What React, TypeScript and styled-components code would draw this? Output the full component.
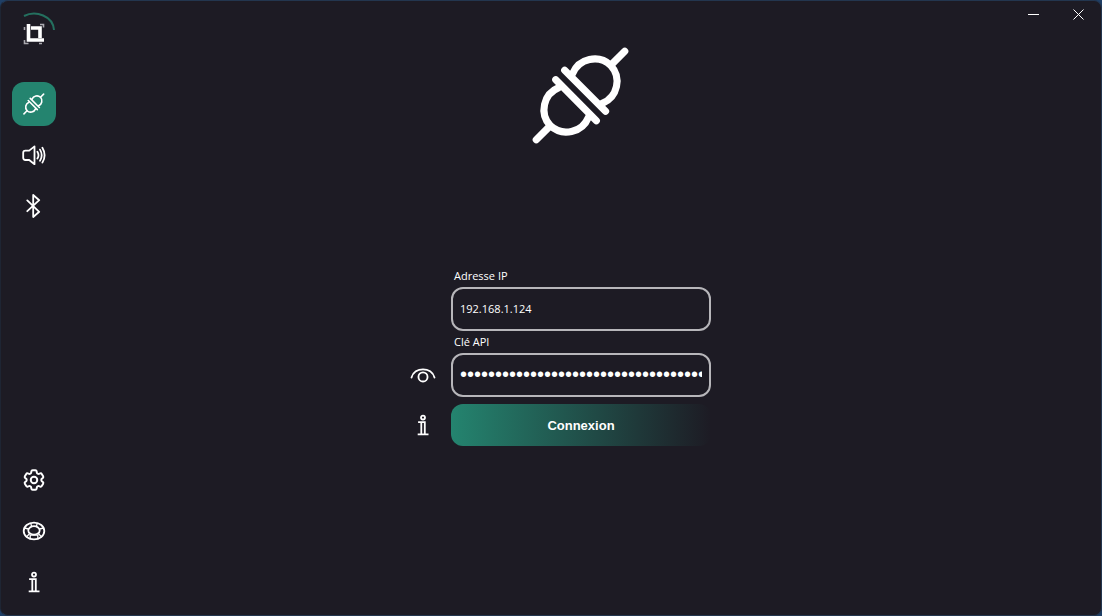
import React, { useState } from 'react';
import styled, { createGlobalStyle } from 'styled-components';
import { HiOutlineCog6Tooth } from 'react-icons/hi2';

const GlobalStyle = createGlobalStyle`
  *, *::before, *::after { box-sizing: border-box; }
  body {
    margin: 0;
    background: #1f3f66;
    color: #ffffff;
    font-family: "Open Sans", "Noto Sans", sans-serif;
    font-size: 11px;
  }
`;

const Window = styled.div`
  display: flex;
  min-height: 100vh;
  position: relative;
  background: #1d1b24;
  border: 1px solid #23364f;
  border-left-color: #1e2533;
  border-radius: 8px;
`;

const Sidebar = styled.aside`
  display: flex;
  flex-direction: column;
  flex: none;
  width: 60px;
  padding: 9px 4px 11px 11px;
`;

const LogoSlot = styled.div`
  height: 40px;
  margin-bottom: 32px;
`;

const NavGroup = styled.nav<{ $end?: boolean }>`
  display: flex;
  flex-direction: column;
  gap: 7px;
  margin-top: ${(p) => (p.$end ? 'auto' : '0')};
`;

const IconButton = styled.button<{ $active?: boolean }>`
  display: flex;
  align-items: center;
  justify-content: center;
  width: 44px;
  height: 44px;
  padding: 0;
  border: 0;
  border-radius: 12px;
  color: #ffffff;
  background: ${(p) => (p.$active ? '#24846f' : 'transparent')};
  cursor: pointer;
`;

const GearIcon = styled(HiOutlineCog6Tooth)`
  path { stroke-width: 1.8; }
`;

const Main = styled.main`
  display: flex;
  flex-direction: column;
  align-items: center;
  flex: 1;
  padding-top: 45px;
`;

const Form = styled.form`
  display: grid;
  grid-template-columns: 44px 260px 44px;
  column-gap: 6px;
  margin-top: 120px;
`;

const Label = styled.label`
  grid-column: 2;
  height: 22px;
  padding: 2px 3px;
  line-height: 18px;
`;

const TextInput = styled.input<{ $masked?: boolean }>`
  grid-column: 2;
  width: 100%;
  height: 44px;
  padding: 0 7px 2px;
  border: 2px solid #b7b6ba;
  border-radius: 12px;
  outline: none;
  background: transparent;
  color: #ffffff;
  font-family: ${(p) => (p.$masked ? '"Liberation Sans", sans-serif' : 'inherit')};
  font-size: ${(p) => (p.$masked ? '20px' : '11px')};
`;

const SideCell = styled.div<{ $row: number }>`
  grid-column: 1;
  grid-row: ${(p) => p.$row};
`;

const Submit = styled.button`
  grid-column: 2;
  height: 42px;
  margin-top: 7px;
  border: 0;
  border-radius: 12px;
  background: linear-gradient(90deg, #24846f, #1d1b24);
  color: #ffffff;
  font-family: "Liberation Sans", sans-serif;
  font-size: 13px;
  font-weight: 700;
  cursor: pointer;
`;

const InfoCell = styled(SideCell)`
  margin-top: 6px;
`;

const Caption = styled.div`
  position: absolute;
  top: 0;
  right: 0;
  display: flex;
`;

const CaptionButton = styled.button`
  display: flex;
  align-items: center;
  justify-content: center;
  width: 45px;
  height: 26px;
  padding: 0;
  border: 0;
  background: transparent;
  color: #ffffff;
`;

const Glyph = ({ size = 24, width = 2, children }: { size?: number; width?: number; children: React.ReactNode }) => (
  <svg width={size} height={size} viewBox="0 0 24 24" fill="none" stroke="currentColor" strokeWidth={width} strokeLinecap="round" strokeLinejoin="round" aria-hidden="true">
    {children}
  </svg>
);

const Plug = ({ size }: { size: number }) => (
  <svg width={size} height={size} viewBox="1 0 100 100" fill="none" stroke="currentColor" strokeWidth="7.2" strokeLinecap="round" aria-hidden="true">
    <path d="M5.3 94.7L19.3 80.7M94.7 5.3L80.7 19.3M25 34L66 75.5M34 24.5L75.3 66" />
    <path d="M42 28A24 24 0 0 1 80.5 19.5A24 24 0 0 1 72 58M28 42A24 24 0 0 0 19.5 80.5A24 24 0 0 0 58 72" />
  </svg>
);

const Logo = () => (
  <svg width="44" height="40" viewBox="0 0 44 40" fill="none" role="img" aria-label="Logo">
    <path d="M12 6C24 0 41 6 42 20" stroke="#24705f" strokeWidth="2" />
    <path d="M12.5 20v-3M28 14.5h3.5v3M12.5 30v3.5h4M27 33.5h3" stroke="#aaa9af" strokeWidth="1.6" />
    <path d="M16.5 14v16h15.5M19 18h9v10" stroke="#ffffff" strokeWidth="3.6" />
  </svg>
);

const Speaker = () => (
  <Glyph width={1.8}>
    <path d="M12.5 3.4v17.8L7.2 17H3.4Q1.2 17 1.2 14.8V9.8Q1.2 7.6 3.4 7.6H7.2Z" />
    <path d="M15.4 8.8q2.2 3.4 0 6.8M18 6.6q3.4 5.6 0 11.2M20.4 4.8q4.4 7.4 0 14.8" />
  </Glyph>
);

const Bluetooth = () => (
  <Glyph width={1.8}>
    <path d="M5.3 6.4L17.2 17.8L11.2 23V1L17.2 6.2L5.3 17.2" />
  </Glyph>
);

const LifeBuoy = () => (
  <Glyph width={1.8}>
    <ellipse cx="12" cy="12" rx="10.3" ry="8.4" />
    <ellipse cx="12" cy="11.4" rx="5.7" ry="4.2" />
    <path d="M8.8 4.4l.8 3.2M15.2 4.4l-.8 3.2M2.5 9l4 1M21.5 9l-4 1M4.8 17.6l3-3.3M19.2 17.6l-3-3.3M8.2 15.8v3.6M15.8 15.8v3.6M8.2 16.2h7.6" strokeWidth="1.3" />
  </Glyph>
);

const Info = () => (
  <Glyph width={1.8}>
    <circle cx="12" cy="4.6" r="2" />
    <path d="M8 9.2h5.8v12M10.3 9.2v12M7.6 21.3h9" strokeLinecap="square" strokeLinejoin="miter" />
  </Glyph>
);

const Eye = () => (
  <Glyph size={26} width={1.7}>
    <path d="M1.4 14.4C4 4.2 20 4.2 22.6 14.4" />
    <circle cx="12" cy="13.8" r="4.2" />
  </Glyph>
);

export default function App() {
  const [ip, setIp] = useState('192.168.1.124');
  const [apiKey, setApiKey] = useState('0123456789abcdef0123456789abcdef01234567');
  const [visible, setVisible] = useState(false);

  return (
    <>
      <GlobalStyle />
      <Window>
        <Sidebar>
          <LogoSlot><Logo /></LogoSlot>
          <NavGroup>
            <IconButton $active aria-label="Connexion"><Plug size={22} /></IconButton>
            <IconButton aria-label="Audio"><Speaker /></IconButton>
            <IconButton aria-label="Bluetooth"><Bluetooth /></IconButton>
          </NavGroup>
          <NavGroup $end>
            <IconButton aria-label="Paramètres"><GearIcon size={26} /></IconButton>
            <IconButton aria-label="Aide"><LifeBuoy /></IconButton>
            <IconButton aria-label="Informations"><Info /></IconButton>
          </NavGroup>
        </Sidebar>
        <Main>
          <Plug size={99} />
          <Form onSubmit={(e) => e.preventDefault()}>
            <Label htmlFor="ip">Adresse IP</Label>
            <TextInput id="ip" type="text" value={ip} onChange={(e) => setIp(e.target.value)} />
            <Label htmlFor="key">Clé API</Label>
            <SideCell $row={4}>
              <IconButton type="button" aria-label="Afficher la clé" onClick={() => setVisible(!visible)}><Eye /></IconButton>
            </SideCell>
            <TextInput id="key" $masked={!visible} type={visible ? 'text' : 'password'} value={apiKey} onChange={(e) => setApiKey(e.target.value)} />
            <InfoCell $row={5}>
              <IconButton type="button" aria-label="Aide sur la clé"><Info /></IconButton>
            </InfoCell>
            <Submit type="submit">Connexion</Submit>
          </Form>
        </Main>
        <Caption>
          <CaptionButton aria-label="Réduire">
            <svg width="11" height="11" stroke="currentColor" aria-hidden="true"><path d="M0 5.5h11" /></svg>
          </CaptionButton>
          <CaptionButton aria-label="Fermer">
            <svg width="11" height="11" stroke="currentColor" aria-hidden="true"><path d="M.5 .5l10 10M10.5 .5l-10 10" /></svg>
          </CaptionButton>
        </Caption>
      </Window>
    </>
  );
}
